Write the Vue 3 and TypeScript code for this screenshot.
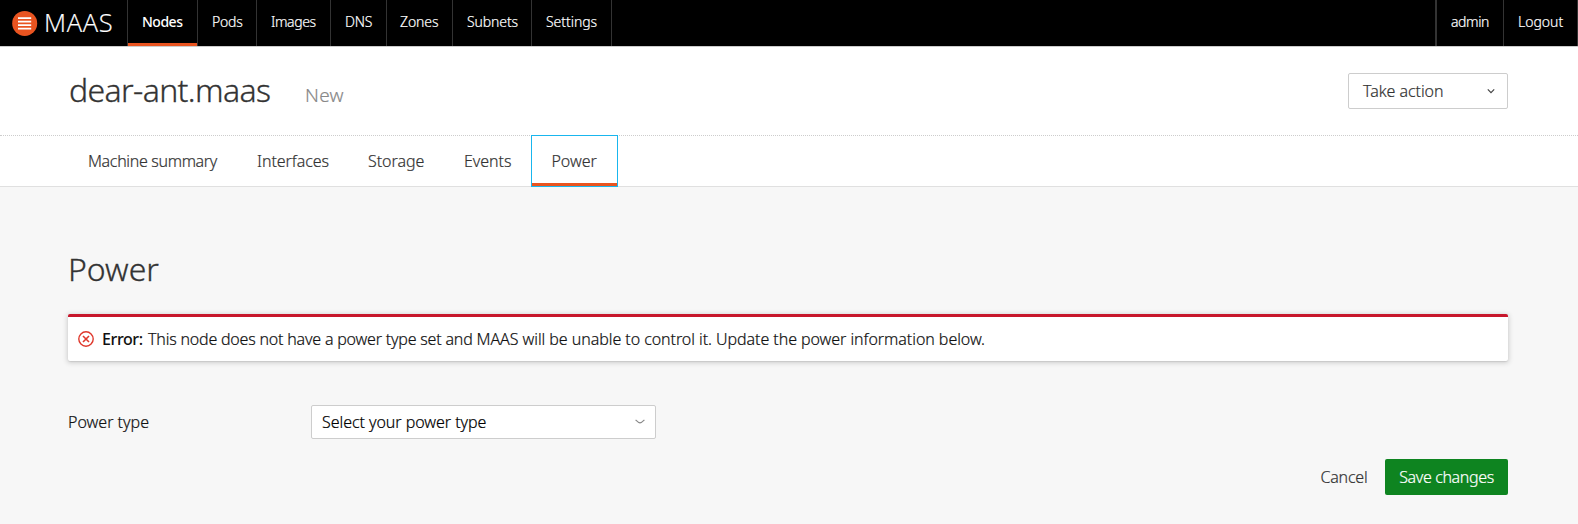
<script setup lang="ts">
import { ref } from 'vue'

interface Item {
  label: string
  key: string
}

const links: Item[] = [
  { label: 'Nodes', key: 'nodes' },
  { label: 'Pods', key: 'pods' },
  { label: 'Images', key: 'images' },
  { label: 'DNS', key: 'dns' },
  { label: 'Zones', key: 'zones' },
  { label: 'Subnets', key: 'subnets' },
  { label: 'Settings', key: 'settings' },
]

const tabs: Item[] = [
  { label: 'Machine summary', key: 'summary' },
  { label: 'Interfaces', key: 'interfaces' },
  { label: 'Storage', key: 'storage' },
  { label: 'Events', key: 'events' },
  { label: 'Power', key: 'power' },
]

const activeLink = ref('nodes')
const activeTab = ref('power')
</script>

<template>
  <div class="page">
    <header class="topbar">
      <a class="brand">
        <svg class="brand-mark" width="26" height="26" viewBox="0 0 26 26">
          <circle cx="12.7" cy="13.4" r="12.5" fill="#e95420" />
          <path d="M6 8.1h13.2M6 11.6h13.2M6 15.1h13.2M6 18.6h13.2" stroke="#fff" stroke-width="1.7" />
        </svg>
        <span class="brand-name">MAAS</span>
      </a>
      <nav class="links">
        <a
          v-for="l in links"
          :key="l.key"
          class="link"
          :class="[l.key, { active: l.key === activeLink }]"
          @click="activeLink = l.key"
        >{{ l.label }}</a>
      </nav>
      <nav class="account">
        <a class="link admin">admin</a>
        <a class="link logout">Logout</a>
      </nav>
    </header>

    <section class="titlebar">
      <h1 class="title">dear-ant.maas</h1>
      <span class="status">New</span>
      <button class="action" type="button">
        <span>Take action</span>
        <svg width="8" height="6" viewBox="0 0 8 6">
          <path d="M0.8 1.4 4 4.6 7.2 1.4" fill="none" stroke="#444" stroke-width="1.2" />
        </svg>
      </button>
    </section>

    <nav class="tabs">
      <a
        v-for="t in tabs"
        :key="t.key"
        class="tab"
        :class="['tab-' + t.key, { current: t.key === activeTab }]"
        @click="activeTab = t.key"
      >{{ t.label }}</a>
    </nav>

    <main class="content">
      <h2 class="heading">Power</h2>
      <div class="alert">
        <svg class="alert-icon" width="16" height="16" viewBox="0 0 16 16">
          <circle cx="8" cy="8" r="7.2" fill="none" stroke="#df382c" stroke-width="1.4" />
          <path d="M5 5 11 11M11 5 5 11" stroke="#df382c" stroke-width="1.6" />
        </svg>
        <strong class="alert-label">Error:</strong>
        <span class="alert-text"><span class="lead">This node does not have a power type set and </span>MAAS will be unable to control it. Update the power information below.</span>
      </div>
      <div class="field">
        <label class="field-label">Power type</label>
        <div class="select">
          <span>Select your power type</span>
          <svg width="10" height="6" viewBox="0 0 10 6">
            <path d="M0.6 0.8C2.2 2.4 3.6 3.9 5 3.9S7.8 2.4 9.4 0.8" fill="none" stroke="#888" stroke-width="1.2" />
          </svg>
        </div>
      </div>
      <div class="actions">
        <a class="cancel">Cancel</a>
        <button class="save" type="button">Save changes</button>
      </div>
    </main>
  </div>
</template>

<style>
body {
  margin: 0;
  background: #f7f7f7;
}
</style>

<style scoped>
.page {
  box-sizing: border-box;
  height: 524px;
  overflow: hidden;
  font-family: "Noto Sans", "Open Sans", sans-serif;
  font-size: 16px;
  font-weight: 300;
  line-height: 24px;
  color: #333;
  background: #f7f7f7;
  -webkit-text-stroke: 0.2px;
}
.page * {
  box-sizing: border-box;
}
.topbar {
  display: flex;
  height: 47px;
  background: #000;
  border-bottom: 1px solid #ccc;
}
.brand {
  display: flex;
  width: 127px;
  padding-left: 12px;
}
.brand-mark {
  margin-top: 10px;
}
.brand-name {
  margin-left: 6px;
  font-family: "Open Sans", sans-serif;
  font-size: 25.5px;
  letter-spacing: 0.7px;
  line-height: 45px;
  color: #fff;
}
.links {
  display: flex;
  border-left: 1px solid #333;
}
.account {
  display: flex;
  margin-left: auto;
  border-left: 1px solid #333;
}
.link {
  height: 46px;
  padding-left: 14px;
  border-right: 1px solid #333;
  font-size: 14px;
  line-height: 43px;
  color: #fff;
  white-space: nowrap;
}
.nodes { width: 70px; }
.pods { width: 59px; letter-spacing: -0.2px; }
.images { width: 74px; letter-spacing: -0.4px; }
.dns { width: 56px; letter-spacing: -0.2px; }
.zones { width: 66px; padding-left: 13px; letter-spacing: -0.1px; }
.subnets { width: 79px; letter-spacing: -0.1px; }
.settings { width: 80px; letter-spacing: -0.05px; }
.admin {
  width: 68px;
  border-left: 1px solid #333;
  letter-spacing: -0.4px;
}
.logout { width: 74px; }
.link.active {
  font-weight: 500;
  letter-spacing: -0.5px;
  -webkit-text-stroke: 0;
  box-shadow: inset 0 -3px #e95420;
}
.titlebar {
  display: flex;
  height: 88px;
  padding: 26px 70px 0 69px;
  background: #fff;
}
.title {
  width: 236px;
  margin: 0;
  font-size: 32px;
  font-weight: 300;
  letter-spacing: -0.65px;
  line-height: 34px;
  -webkit-text-stroke: 0.3px;
}
.status {
  margin-top: 6px;
  font-size: 19px;
  letter-spacing: 0.3px;
  line-height: 32px;
  color: #888;
}
.action {
  display: flex;
  align-items: center;
  justify-content: space-between;
  width: 160px;
  height: 36px;
  margin-left: auto;
  padding: 0 12px 0 14px;
  border: 1px solid #cdcdcd;
  border-radius: 2px;
  background: #fff;
  font: inherit;
  letter-spacing: -0.05px;
  color: #333;
}
.tabs {
  display: flex;
  height: 52px;
  padding-left: 68px;
  background: #fff;
  border-top: 1px dotted #cdcdcd;
  border-bottom: 1px solid #e0e0e0;
}
.tab {
  height: 50px;
  padding-left: 20px;
  line-height: 51px;
  letter-spacing: -0.05px;
  white-space: nowrap;
}
.tab-summary {
  width: 169px;
  letter-spacing: -0.33px;
}
.tab-interfaces { width: 111px; }
.tab-storage { width: 96px; }
.tab-events { width: 87px; }
.tab-power { width: 87px; }
.tab.current {
  height: 52px;
  margin-top: -1px;
  padding-left: 19.5px;
  border: 1px solid #19b6ee;
  background: linear-gradient(#e95420, #e95420) bottom / 100% 3px no-repeat #fff;
}
.content {
  padding: 65px 70px 0 68px;
}
.heading {
  margin: 0;
  font-size: 32px;
  font-weight: 300;
  line-height: 34px;
  -webkit-text-stroke: 0.3px;
}
.alert {
  display: flex;
  align-items: center;
  height: 47px;
  margin-top: 28px;
  padding-left: 10px;
  border-top: 3px solid #c7162b;
  border-radius: 2px;
  background: #fff;
  box-shadow: 0 1px 5px 1px rgba(0, 0, 0, 0.16), 0 1px 1px rgba(0, 0, 0, 0.08);
  color: #111;
}
.alert-label {
  width: 46px;
  margin-left: 8px;
  font-weight: 500;
  letter-spacing: -0.4px;
  -webkit-text-stroke: 0;
}
.alert-text {
  letter-spacing: -0.06px;
  white-space: nowrap;
}
.lead {
  letter-spacing: -0.2px;
}
.field {
  display: flex;
  align-items: center;
  height: 34px;
  margin-top: 44px;
  color: #111;
}
.field-label {
  width: 243px;
}
.select {
  display: flex;
  align-items: center;
  justify-content: space-between;
  width: 345px;
  height: 34px;
  padding: 0 10px;
  border: 1px solid #cdcdcd;
  border-radius: 2px;
  background: #fff;
  letter-spacing: -0.05px;
  color: #000;
}
.actions {
  display: flex;
  align-items: center;
  justify-content: flex-end;
  margin-top: 20px;
}
.cancel {
  margin-right: 17.5px;
  letter-spacing: -0.2px;
}
.save {
  width: 123px;
  height: 36px;
  padding: 0;
  border: 0;
  border-radius: 2px;
  background: #0e8420;
  font: inherit;
  letter-spacing: -0.36px;
  color: #fff;
}
</style>
